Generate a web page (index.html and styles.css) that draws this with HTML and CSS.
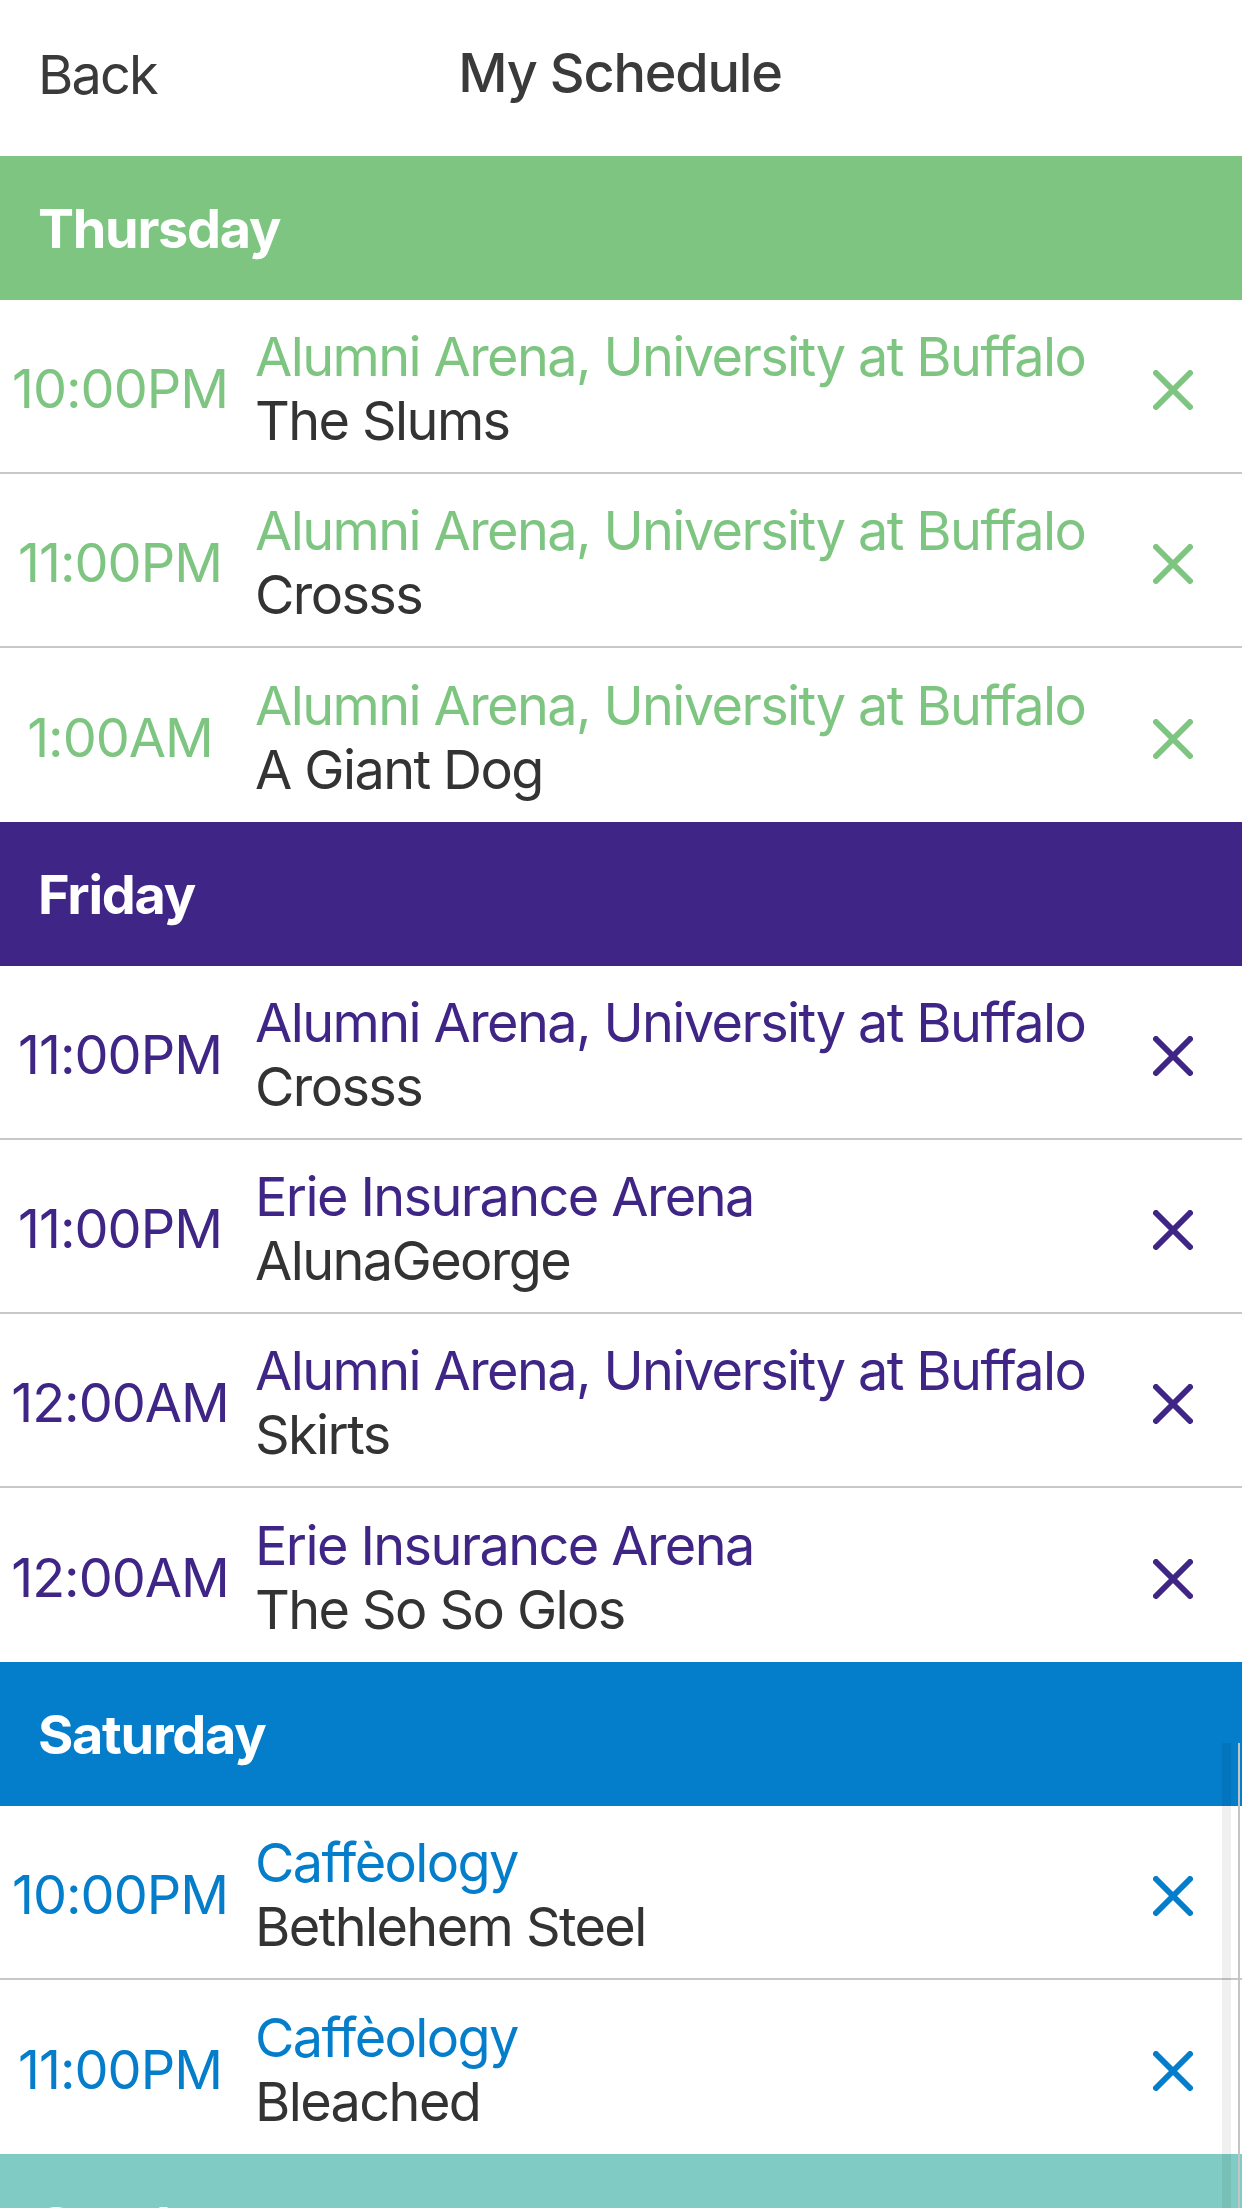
FILE: index.html
```html
<!DOCTYPE html>
<html lang="en">
<head>
<meta charset="utf-8">
<title>My Schedule</title>
<link rel="stylesheet" href="styles.css">
</head>
<body>
<div class="screen">
  <header class="nav">
    <span class="nav-back">Back</span>
    <h1 class="nav-title">My Schedule</h1>
    <span></span>
  </header>

  <section class="day day-thu">
    <h2 class="day-title">Thursday</h2>
    <div class="row">
      <div class="time">10:00PM</div>
      <div class="info"><div class="venue">Alumni Arena, University at Buffalo</div><div class="act">The Slums</div></div>
      <div class="remove"><svg viewBox="0 0 40 40" class="x"><path d="M3 3L37 37M37 3L3 37"/></svg></div>
    </div>
    <div class="row">
      <div class="time">11:00PM</div>
      <div class="info"><div class="venue">Alumni Arena, University at Buffalo</div><div class="act">Crosss</div></div>
      <div class="remove"><svg viewBox="0 0 40 40" class="x"><path d="M3 3L37 37M37 3L3 37"/></svg></div>
    </div>
    <div class="row">
      <div class="time">1:00AM</div>
      <div class="info"><div class="venue">Alumni Arena, University at Buffalo</div><div class="act">A Giant Dog</div></div>
      <div class="remove"><svg viewBox="0 0 40 40" class="x"><path d="M3 3L37 37M37 3L3 37"/></svg></div>
    </div>
  </section>

  <section class="day day-fri">
    <h2 class="day-title">Friday</h2>
    <div class="row">
      <div class="time">11:00PM</div>
      <div class="info"><div class="venue">Alumni Arena, University at Buffalo</div><div class="act">Crosss</div></div>
      <div class="remove"><svg viewBox="0 0 40 40" class="x"><path d="M3 3L37 37M37 3L3 37"/></svg></div>
    </div>
    <div class="row">
      <div class="time">11:00PM</div>
      <div class="info"><div class="venue">Erie Insurance Arena</div><div class="act">AlunaGeorge</div></div>
      <div class="remove"><svg viewBox="0 0 40 40" class="x"><path d="M3 3L37 37M37 3L3 37"/></svg></div>
    </div>
    <div class="row">
      <div class="time">12:00AM</div>
      <div class="info"><div class="venue">Alumni Arena, University at Buffalo</div><div class="act">Skirts</div></div>
      <div class="remove"><svg viewBox="0 0 40 40" class="x"><path d="M3 3L37 37M37 3L3 37"/></svg></div>
    </div>
    <div class="row">
      <div class="time">12:00AM</div>
      <div class="info"><div class="venue">Erie Insurance Arena</div><div class="act">The So So Glos</div></div>
      <div class="remove"><svg viewBox="0 0 40 40" class="x"><path d="M3 3L37 37M37 3L3 37"/></svg></div>
    </div>
  </section>

  <section class="day day-sat">
    <h2 class="day-title">Saturday</h2>
    <div class="row">
      <div class="time">10:00PM</div>
      <div class="info"><div class="venue">Caffèology</div><div class="act">Bethlehem Steel</div></div>
      <div class="remove"><svg viewBox="0 0 40 40" class="x"><path d="M3 3L37 37M37 3L3 37"/></svg></div>
    </div>
    <div class="row">
      <div class="time">11:00PM</div>
      <div class="info"><div class="venue">Caffèology</div><div class="act">Bleached</div></div>
      <div class="remove"><svg viewBox="0 0 40 40" class="x"><path d="M3 3L37 37M37 3L3 37"/></svg></div>
    </div>
  </section>

  <section class="day day-sun">
    <h2 class="day-title">Sunday</h2>
  </section>

  <div class="scrollbar"><div class="scroll-track"></div><div class="scroll-edge"></div></div>
</div>
</body>
</html>
```

FILE: styles.css
```css
html, body {
  margin: 0;
  padding: 0;
  background: #ffffff;
}

body {
  font-family: Inter, "Liberation Sans", Arial, sans-serif;
  color: #333333;
  -webkit-font-smoothing: antialiased;
}

.screen {
  width: 1242px;
  height: 2208px;
  overflow: hidden;
  position: relative;
}

.nav {
  height: 156px;
  display: grid;
  grid-template-columns: 1fr auto 1fr;
  align-items: start;
  padding: 0 40px 0 38px;
  box-sizing: border-box;
}

.nav-back {
  font-size: 54px;
  line-height: 64px;
  padding-top: 43px;
  color: #3a3a3a;
  letter-spacing: -1.8px;
}

.nav-title {
  margin: 0;
  font-size: 54px;
  line-height: 64px;
  padding-top: 41px;
  font-weight: 500;
  color: #3a3a3a;
  letter-spacing: -1.2px;
}

.day {
  --accent: #7dc581;
}

.day-thu { --accent: #7dc581; }
.day-fri { --accent: #3f2586; }
.day-sat { --accent: #047dcb; }
.day-sun { --accent: #80cbc4; }

.day-title {
  margin: 0;
  height: 144px;
  display: flex;
  align-items: center;
  padding-left: 38px;
  background: var(--accent);
  color: #ffffff;
  font-size: 54px;
  font-weight: 700;
  letter-spacing: -1.3px;
}

.row {
  height: 174px;
  box-sizing: border-box;
  display: grid;
  grid-template-columns: 240px 1fr 80px;
  align-items: center;
  padding: 6px 29px 0 0;
  border-bottom: 2px solid #c8c8c8;
}

.row:last-child {
  border-bottom: none;
}

.time {
  text-align: center;
  font-size: 54px;
  line-height: 64px;
  color: var(--accent);
  letter-spacing: -1px;
}

.info {
  margin-left: 15px;
  font-size: 54px;
  line-height: 64px;
  letter-spacing: -1.6px;
  white-space: nowrap;
}

.venue {
  color: var(--accent);
}

.act {
  color: #333333;
}

.remove {
  display: flex;
  justify-content: center;
  padding-top: 2px;
}

.x {
  width: 40px;
  height: 40px;
  fill: none;
  stroke: var(--accent);
  stroke-width: 6;
  stroke-linecap: round;
}

.scrollbar {
  position: absolute;
  top: 1743px;
  bottom: 0;
  right: 0;
  width: 22px;
}

.scroll-track {
  position: absolute;
  top: 0;
  bottom: 0;
  left: 2px;
  width: 9px;
  background: rgba(0, 0, 0, 0.06);
}

.scroll-edge {
  position: absolute;
  top: 0;
  bottom: 0;
  right: 2px;
  width: 2px;
  background: #c4c4c4;
}
```
